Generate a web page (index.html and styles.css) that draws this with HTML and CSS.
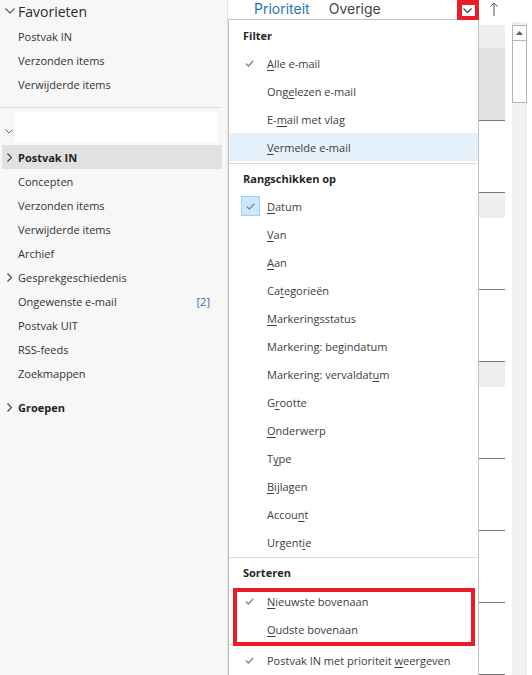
FILE: index.html
```html
<!DOCTYPE html>
<html lang="nl">
<head>
<meta charset="utf-8">
<title>Outlook</title>
<link rel="stylesheet" href="styles.css">
</head>
<body>
<div class="app">
  <aside class="nav">
    <div class="fav">
      <div class="fav-head">
        <span class="slot"><svg class="chev-d" width="10" height="6" viewBox="0 0 10 6"><polyline points="0.5,0.5 5,5 9.5,0.5"/></svg></span>
        <span>Favorieten</span>
      </div>
      <div class="row"><span class="slot"></span><span>Postvak IN</span></div>
      <div class="row"><span class="slot"></span><span>Verzonden items</span></div>
      <div class="row"><span class="slot"></span><span>Verwijderde items</span></div>
    </div>
    <div class="account">
      <span class="acc-slot"><svg class="chev-s" width="8" height="5" viewBox="0 0 8 5"><polyline points="0.5,0.5 4,4 7.5,0.5"/></svg></span>
      <div class="acc-box"></div>
    </div>
    <div class="row sel"><span class="slot"><svg class="chev-r" width="5" height="9" viewBox="0 0 5 9"><polyline points="0.5,0.5 4.5,4.5 0.5,8.5"/></svg></span><span>Postvak IN</span></div>
    <div class="row"><span class="slot"></span><span>Concepten</span></div>
    <div class="row"><span class="slot"></span><span>Verzonden items</span></div>
    <div class="row"><span class="slot"></span><span>Verwijderde items</span></div>
    <div class="row"><span class="slot"></span><span>Archief</span></div>
    <div class="row"><span class="slot"><svg class="chev-r" width="5" height="9" viewBox="0 0 5 9"><polyline points="0.5,0.5 4.5,4.5 0.5,8.5"/></svg></span><span>Gesprekgeschiedenis</span></div>
    <div class="row"><span class="slot"></span><span>Ongewenste e-mail</span><span class="count">[2]</span></div>
    <div class="row"><span class="slot"></span><span>Postvak UIT</span></div>
    <div class="row"><span class="slot"></span><span>RSS-feeds</span></div>
    <div class="row"><span class="slot"></span><span>Zoekmappen</span></div>
    <div class="row bold groups"><span class="slot"><svg class="chev-r" width="5" height="9" viewBox="0 0 5 9"><polyline points="0.5,0.5 4.5,4.5 0.5,8.5"/></svg></span><span>Groepen</span></div>
  </aside>

  <main class="main">
    <div class="tabs">
      <span class="tab active">Prioriteit</span>
      <span class="tab">Overige</span>
      <div class="tools">
        <span class="dd-btn"><svg width="9" height="5" viewBox="0 0 9 5"><polyline points="0.5,0.5 4.5,4.5 8.5,0.5"/></svg></span>
        <svg class="arrow-up" width="8" height="14" viewBox="0 0 8 14"><line x1="4" y1="1" x2="4" y2="14"/><polyline points="0.5,4.5 4,1 7.5,4.5"/></svg>
      </div>
    </div>

    <div class="body">
      <div class="list">
        <div class="gap"></div>
        <div class="grp"></div>
        <div class="msg msg-sel"></div>
        <div class="msg"></div>
        <div class="grp"></div>
        <div class="msg"></div>
        <div class="msg"></div>
        <div class="grp"></div>
        <div class="msg"></div>
        <div class="msg"></div>
        <div class="msg"></div>
        <div class="msg"></div>
      </div>
      <div class="scroll">
        <div class="sb-up"><svg width="7" height="4" viewBox="0 0 7 4"><polygon points="0,4 3.5,0 7,4"/></svg></div>
        <div class="sb-thumb"></div>
      </div>
    </div>

    <div class="menu">
      <div class="mh">Filter</div>
      <div class="mi"><span class="ck"><svg class="check" width="9" height="7" viewBox="0 0 9 7"><polyline points="0.8,3.6 3.4,6 8.2,0.8"/></svg></span><span><u>A</u>lle e-mail</span></div>
      <div class="mi"><span class="ck"></span><span>Ong<u>e</u>lezen e-mail</span></div>
      <div class="mi"><span class="ck"></span><span>E-<u>m</u>ail met vlag</span></div>
      <div class="mi hl"><span class="ck"></span><span><u>V</u>ermelde e-mail</span></div>
      <div class="sep sep1"></div>
      <div class="mh">Rangschikken op</div>
      <div class="mi"><span class="ck"><span class="ckbox"><svg class="check" width="9" height="7" viewBox="0 0 9 7"><polyline points="0.8,3.6 3.4,6 8.2,0.8"/></svg></span></span><span><u>D</u>atum</span></div>
      <div class="mi"><span class="ck"></span><span><u>V</u>an</span></div>
      <div class="mi"><span class="ck"></span><span><u>A</u>an</span></div>
      <div class="mi"><span class="ck"></span><span>Ca<u>t</u>egorieën</span></div>
      <div class="mi"><span class="ck"></span><span><u>M</u>arkeringsstatus</span></div>
      <div class="mi"><span class="ck"></span><span>Markerin<u>g</u>: begindatum</span></div>
      <div class="mi"><span class="ck"></span><span>Markering: vervaldat<u>u</u>m</span></div>
      <div class="mi"><span class="ck"></span><span>G<u>r</u>ootte</span></div>
      <div class="mi"><span class="ck"></span><span><u>O</u>nderwerp</span></div>
      <div class="mi"><span class="ck"></span><span>T<u>y</u>pe</span></div>
      <div class="mi"><span class="ck"></span><span><u>B</u>ijlagen</span></div>
      <div class="mi"><span class="ck"></span><span>Accou<u>n</u>t</span></div>
      <div class="mi"><span class="ck"></span><span>Urgent<u>i</u>e</span></div>
      <div class="sep sep2"></div>
      <div class="mh raised">Sorteren</div>
      <div class="mi"><span class="ck"><svg class="check" width="9" height="7" viewBox="0 0 9 7"><polyline points="0.8,3.6 3.4,6 8.2,0.8"/></svg></span><span><u>N</u>ieuwste bovenaan</span></div>
      <div class="mi"><span class="ck"></span><span><u>O</u>udste bovenaan</span></div>
      <div class="sep sep3"></div>
      <div class="mi"><span class="ck"><svg class="check" width="9" height="7" viewBox="0 0 9 7"><polyline points="0.8,3.6 3.4,6 8.2,0.8"/></svg></span><span>Postvak IN met prioriteit <u>w</u>eergeven</span></div>
    </div>

    <div class="mark mark-btn"></div>
    <div class="mark mark-sort"></div>
  </main>
</div>
</body>
</html>
```

FILE: styles.css
```css
* { box-sizing: border-box; }

html, body {
  margin: 0;
  padding: 0;
}

body {
  width: 532px;
  height: 675px;
  overflow: hidden;
  background: #ffffff;
  font-family: "Open Sans", "Noto Sans", sans-serif;
  font-size: 11px;
  color: #333333;
}

.app {
  display: flex;
  height: 675px;
}

/* ---------- navigation pane ---------- */
.nav {
  width: 228px;
  flex: none;
  background: #f7f7f7;
  border-right: 1px solid #e3e3e3;
  padding-right: 5px;
  height: 675px;
}

.fav {
  padding-bottom: 11px;
  border-bottom: 1px solid #dcdcdc;
}

.fav-head {
  display: flex;
  align-items: center;
  height: 22px;
  margin-bottom: 2px;
  font-size: 14px;
  color: #2b2b2b;
}

.row {
  display: flex;
  align-items: center;
  height: 24px;
  white-space: nowrap;
}

.slot {
  width: 18px;
  flex: none;
  display: flex;
  align-items: center;
}

.chev-d {
  margin-left: 5px;
  fill: none;
  stroke: #555555;
  stroke-width: 1.1;
}

.chev-r {
  margin-left: 7px;
  fill: none;
  stroke: #444444;
  stroke-width: 1.2;
}

.chev-s {
  fill: none;
  stroke: #666666;
  stroke-width: 1;
}

.account {
  display: flex;
  align-items: flex-end;
  margin-top: 4px;
  height: 30px;
}

.acc-slot {
  width: 15px;
  flex: none;
  padding-left: 5px;
  padding-bottom: 8px;
  display: flex;
}

.acc-box {
  width: 203px;
  height: 30px;
  background: #ffffff;
}

.sel {
  margin-top: 3px;
  margin-left: 2px;
  background: #e1e1e1;
  font-weight: 700;
  color: #222222;
}

.sel .slot {
  width: 16px;
}

.sel .chev-r {
  margin-left: 5px;
}

.bold {
  font-weight: 700;
  color: #222222;
}

.groups {
  margin-top: 10px;
}

.count {
  margin-left: auto;
  padding-right: 12px;
  color: #2a6db3;
}

/* ---------- main area ---------- */
.main {
  flex: 1;
  position: relative;
  display: flex;
  flex-direction: column;
  height: 675px;
}

.tabs {
  display: flex;
  align-items: flex-start;
  height: 19px;
  padding-left: 26px;
  padding-right: 34px;
  gap: 19px;
  font-family: "Inter", "Open Sans", sans-serif;
  font-size: 14px;
  line-height: 17px;
  color: #444444;
}

.tab.active {
  color: #2b73b9;
}

.tools {
  margin-left: auto;
  display: flex;
  align-items: flex-start;
}

.dd-btn {
  margin-top: 5px;
  width: 13px;
  height: 11px;
  background: #ffffff;
  display: flex;
  align-items: center;
  justify-content: center;
}

.dd-btn svg {
  fill: none;
  stroke: #444444;
  stroke-width: 1.2;
}

.arrow-up {
  margin-left: 16px;
  margin-top: 2px;
  fill: none;
  stroke: #555555;
  stroke-width: 1;
}

.body {
  display: flex;
  flex: 1;
  min-height: 0;
}

.list {
  width: 277px;
  flex: none;
}

.gap {
  height: 6px;
}

.grp {
  height: 23px;
  background: #efefef;
}

.msg + .grp {
  height: 25px;
}

.msg {
  height: 72px;
  border-bottom: 1px solid #7a7a7a;
  background: #ffffff;
}

.msg-sel {
  height: 73px;
  background: #e1e1e1;
}

.scroll {
  margin-left: 7px;
  margin-top: 3px;
  padding-top: 3px;
  width: 15px;
  background: #f0f0f0;
  display: flex;
  flex-direction: column;
}

.sb-up {
  height: 16px;
  background: #ffffff;
  border: 1px solid #b4b4b4;
  display: flex;
  align-items: center;
  justify-content: center;
}

.sb-up svg {
  fill: #606060;
}

.sb-thumb {
  height: 62px;
  background: #ffffff;
  border: 1px solid #b4b4b4;
  border-top: none;
}

/* ---------- dropdown menu ---------- */
.menu {
  position: absolute;
  left: 0;
  top: 19px;
  width: 251px;
  height: 680px;
  background: #ffffff;
  border: 1px solid #c3c3c3;
  padding-top: 1px;
  color: #3d3d3d;
}

.mh {
  height: 28px;
  display: flex;
  align-items: center;
  padding-left: 14px;
  font-weight: 700;
  color: #262626;
}

.mh.raised {
  padding-bottom: 2px;
}

.mi {
  height: 28px;
  display: flex;
  align-items: center;
  white-space: nowrap;
}

.mi.hl {
  background: #e5f1fb;
}

.mi u {
  text-decoration-thickness: 1px;
  text-underline-offset: 2px;
}

.ck {
  width: 38px;
  flex: none;
  display: flex;
  align-items: center;
  padding-left: 16px;
}

.check {
  fill: none;
  stroke: #858585;
  stroke-width: 1.3;
}

.ckbox {
  margin-left: -4px;
  width: 19px;
  height: 20px;
  background: #cce8ff;
  border: 1px solid #99d1ff;
  display: flex;
  align-items: center;
  justify-content: center;
}

.sep {
  height: 1px;
  background: #dcdcdc;
}

.sep1 {
  margin: 2px 0 0;
}

.sep2 {
  margin: 1px 0 1px;
}

.sep3 {
  margin: 1px 0 1px;
}

/* ---------- annotation marks ---------- */
.mark {
  position: absolute;
  border: 4px solid #e81d25;
}

.mark-btn {
  left: 229px;
  top: 0;
  width: 22px;
  height: 20px;
  border-width: 5px 4px 4px 5px;
}

.mark-sort {
  left: 5px;
  top: 588px;
  width: 242px;
  height: 58px;
}
```
